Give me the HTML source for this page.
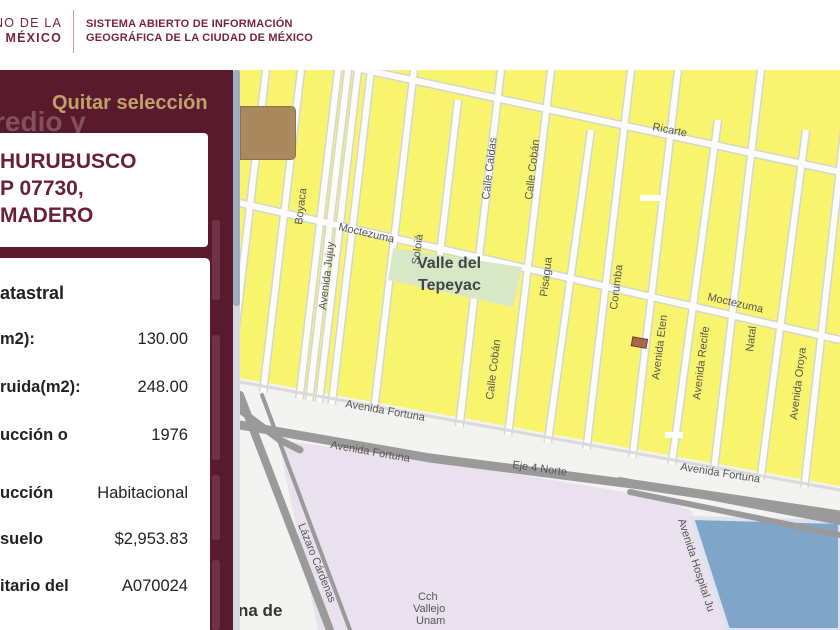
<!DOCTYPE html>
<html><head><meta charset="utf-8"><style>
*{margin:0;padding:0;box-sizing:border-box}
body{width:840px;height:630px;overflow:hidden;background:#fff;font-family:"Liberation Sans",sans-serif;position:relative}
.hdr{position:absolute;left:0;top:0;width:840px;height:70px;background:#fff}
.gob{position:absolute;right:778px;top:16px;text-align:right;color:#7a2438;font-size:12.5px;letter-spacing:1.2px;line-height:15px;white-space:nowrap}
.div{position:absolute;left:73px;top:10px;width:1px;height:43px;background:#c99aa5}
.sis{position:absolute;left:86px;top:17px;color:#7a2438;font-size:11px;font-weight:bold;letter-spacing:.2px;line-height:14px;white-space:nowrap}
.panel{position:absolute;left:0;top:70px;width:233px;height:560px;background:#5a1a2d;overflow:hidden}
.ghost{position:absolute;left:-6px;top:36px;font-size:28px;font-weight:bold;color:#84505f;white-space:nowrap}
.quitar{position:absolute;left:52px;top:22px;font-size:20px;font-weight:bold;color:#c2a06a;white-space:nowrap}
.card1{position:absolute;left:-10px;top:63px;width:218px;height:114px;background:#fff;border-radius:4px}
.card1 div{position:absolute;left:10px;font-size:21px;font-weight:bold;color:#6b1f36;white-space:nowrap}
.card2{position:absolute;left:-10px;top:188px;width:220px;height:380px;background:#fff;border-radius:5px}
.card2 .t{position:absolute;left:10px;top:25px;font-size:18px;font-weight:bold;color:#222;white-space:nowrap}
.row{position:absolute;left:10px;width:188px;font-size:16.5px;color:#222;white-space:nowrap}
.row b{position:absolute;left:0}
.row span{position:absolute;right:0}
.side{position:absolute;left:212px;width:8px;background:#6e3346;border-radius:3px}
.scroll{position:absolute;left:233px;top:70px;width:7px;height:560px;background:#d4dae2}
.thumb{position:absolute;left:233px;top:70px;width:7px;height:236px;background:#9eadbf;border-radius:3px}
.map{position:absolute;left:240px;top:70px}
.btn{position:absolute;left:240px;top:106px;width:56px;height:54px;background:#a98a5f;border-radius:0 5px 5px 0;border:1px solid #8f7048}
</style></head><body>
<div class="hdr">
<div class="gob">NO DE LA<br><b>DE MÉXICO</b></div>
<div class="div"></div>
<div class="sis">SISTEMA ABIERTO DE INFORMACIÓN<br>GEOGRÁFICA DE LA CIUDAD DE MÉXICO</div>
</div>

<svg class="map" width="600" height="560" viewBox="240 70 600 560" xmlns="http://www.w3.org/2000/svg" font-family="Liberation Sans, sans-serif">
<rect x="240" y="70" width="600" height="560" fill="#f3f3f1"/>
<polygon points="240,70 840,70 840,486 240,378" fill="#f8f46e"/>
<g stroke="#d6d6d0" stroke-width="9" fill="none">
<line x1="240" y1="43" x2="840" y2="172"/>
<line x1="240" y1="203" x2="840" y2="340"/>
<line x1="266" y1="70" x2="219" y2="470"/>
<line x1="301" y1="70" x2="254" y2="470"/>
<line x1="338" y1="70" x2="291" y2="470"/>
<line x1="348" y1="70" x2="301" y2="470"/>
<line x1="358" y1="70" x2="311" y2="470"/>
<line x1="371" y1="70" x2="324" y2="470"/>
<line x1="414" y1="70" x2="367" y2="470"/>
<line x1="458" y1="100" x2="437" y2="280"/>
<line x1="475" y1="290" x2="458" y2="440"/>
<line x1="501" y1="70" x2="454" y2="470"/>
<line x1="551" y1="70" x2="504" y2="470"/>
<line x1="591" y1="130" x2="544" y2="470"/>
<line x1="631" y1="70" x2="584" y2="470"/>
<line x1="678" y1="70" x2="631" y2="470"/>
<line x1="718" y1="120" x2="671" y2="470"/>
<line x1="761" y1="70" x2="714" y2="470"/>
<line x1="806" y1="130" x2="759" y2="490"/>
<line x1="851" y1="70" x2="804" y2="490"/>
</g>
<g stroke="#fcfcfa" stroke-width="6" fill="none">
<line x1="240" y1="43" x2="840" y2="172"/>
<line x1="240" y1="203" x2="840" y2="340"/>
<line x1="266" y1="70" x2="219" y2="470"/>
<line x1="301" y1="70" x2="254" y2="470"/>
<line x1="338" y1="70" x2="291" y2="470"/>
<line x1="348" y1="70" x2="301" y2="470"/>
<line x1="358" y1="70" x2="311" y2="470"/>
<line x1="371" y1="70" x2="324" y2="470"/>
<line x1="414" y1="70" x2="367" y2="470"/>
<line x1="458" y1="100" x2="437" y2="280"/>
<line x1="475" y1="290" x2="458" y2="440"/>
<line x1="501" y1="70" x2="454" y2="470"/>
<line x1="551" y1="70" x2="504" y2="470"/>
<line x1="591" y1="130" x2="544" y2="470"/>
<line x1="631" y1="70" x2="584" y2="470"/>
<line x1="678" y1="70" x2="631" y2="470"/>
<line x1="718" y1="120" x2="671" y2="470"/>
<line x1="761" y1="70" x2="714" y2="470"/>
<line x1="806" y1="130" x2="759" y2="490"/>
<line x1="851" y1="70" x2="804" y2="490"/>
</g>
<polygon points="393,248 522,267 513,307 388,280" fill="#d8e8c6"/>
<text x="417" y="268" font-size="16" font-weight="bold" fill="#444">Valle del</text>
<text x="418" y="290" font-size="16" font-weight="bold" fill="#444">Tepeyac</text>
<rect x="632" y="338" width="15" height="9" fill="#a66a4a" stroke="#7a3a2a" transform="rotate(10 639 342)"/>
<rect x="640" y="195" width="20" height="6" fill="#fff"/>
<rect x="665" y="432" width="18" height="6" fill="#fff"/>
<polygon points="240,388 840,494 840,630 240,630" fill="#f3f3f1"/>
<polygon points="278,440 430,460 540,478 650,496 690,510 760,630 318,630" fill="#e9e2ee"/>
<polygon points="692,518 840,522 840,630 728,630" fill="#7fa6c8" stroke="#dde2ee" stroke-width="4"/>
<g stroke="#9a9a9a" fill="none" stroke-linecap="round">
<line x1="240" y1="382" x2="840" y2="490" stroke="#dadada" stroke-width="3"/>
<path d="M240,425 L430,458 L640,485 L840,515" stroke-width="9"/>
<path d="M620,480 L840,522" stroke-width="6"/>
<path d="M630,492 L840,535" stroke-width="6"/>
<path d="M240,395 L330,630" stroke-width="8"/>
<path d="M262,395 L350,630" stroke-width="4"/>
<path d="M240,410 L280,440 L300,450" stroke-width="7"/>
</g>
<g font-size="11" fill="#555">
<text x="338" y="230" transform="rotate(13 338 230)">Moctezuma</text>
<text x="707" y="300" transform="rotate(13 707 300)">Moctezuma</text>
<text x="652" y="130" transform="rotate(11 652 130)">Ricarte</text>
<text x="345" y="407" transform="rotate(10 345 407)">Avenida Fortuna</text>
<text x="330" y="448" transform="rotate(10 330 448)">Avenida Fortuna</text>
<text x="680" y="470" transform="rotate(9 680 470)">Avenida Fortuna</text>
<text x="512" y="468" transform="rotate(8 512 468)">Eje 4 Norte</text>
<text x="302" y="225" transform="rotate(-83 302 225)">Boyaca</text>
<text x="326" y="310" transform="rotate(-83 326 310)">Avenida Jujuy</text>
<text x="419" y="265" transform="rotate(-83 419 265)">Soloiá</text>
<text x="489" y="200" transform="rotate(-83 489 200)">Calle Caldas</text>
<text x="532" y="200" transform="rotate(-83 532 200)">Calle Cobán</text>
<text x="547" y="297" transform="rotate(-83 547 297)">Pisagua</text>
<text x="617" y="310" transform="rotate(-83 617 310)">Corumba</text>
<text x="659" y="380" transform="rotate(-83 659 380)">Avenida Eten</text>
<text x="700" y="400" transform="rotate(-83 700 400)">Avenida Recife</text>
<text x="753" y="352" transform="rotate(-83 753 352)">Natal</text>
<text x="797" y="420" transform="rotate(-83 797 420)">Avenida Oroya</text>
<text x="493" y="400" transform="rotate(-83 493 400)">Calle Cobán</text>
<text x="298" y="525" transform="rotate(68 298 525)">Lázaro Cárdenas</text>
<text x="678" y="520" transform="rotate(72 678 520)">Avenida Hospital Ju</text>
<text x="418" y="600">Cch</text>
<text x="413" y="612">Vallejo</text>
<text x="416" y="624">Unam</text>
</g>
<text x="238" y="616" font-size="17" font-weight="bold" fill="#333">na de</text>
</svg>
<div class="btn"></div>

<div class="panel">
<div class="ghost">redio y</div>
<div class="quitar">Quitar selección</div>
<div class="side" style="top:150px;height:80px"></div>
<div class="side" style="top:265px;height:125px"></div>
<div class="side" style="top:405px;height:65px"></div>
<div class="side" style="top:490px;height:70px"></div>
<div class="card1">
<div style="top:17px">HURUBUSCO</div>
<div style="top:44px">P 07730,</div>
<div style="top:71px">MADERO</div>
</div>
<div class="card2">
<div class="t">atastral</div>
<div class="row" style="top:72px"><b>m2):</b><span>130.00</span></div>
<div class="row" style="top:120px"><b>ruida(m2):</b><span>248.00</span></div>
<div class="row" style="top:168px"><b>ucción o</b><span>1976</span></div>
<div class="row" style="top:226px"><b>ucción</b><span>Habitacional</span></div>
<div class="row" style="top:272px"><b>suelo</b><span>$2,953.83</span></div>
<div class="row" style="top:319px"><b>itario del</b><span>A070024</span></div>
</div>
</div>
<div class="scroll"></div><div class="thumb"></div>
</body></html>
